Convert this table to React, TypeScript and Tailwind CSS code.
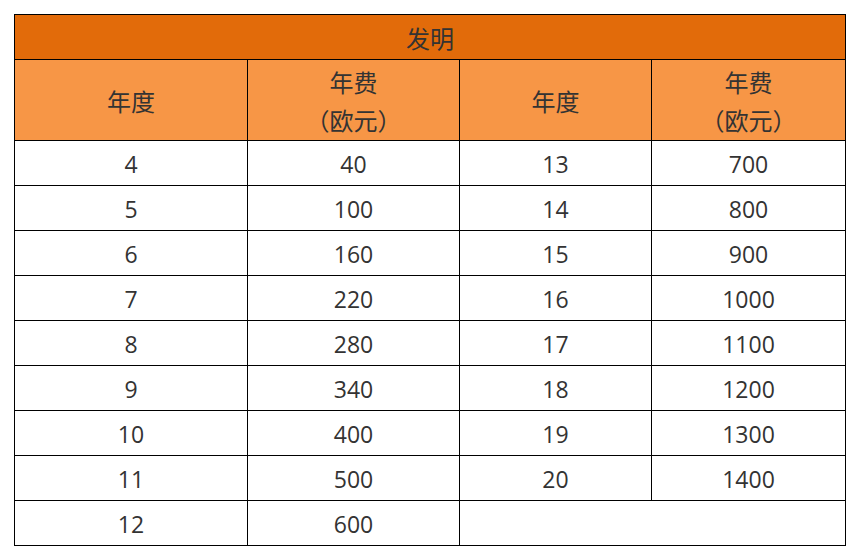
import React from "react";

const left = [
  ["4", "40"],
  ["5", "100"],
  ["6", "160"],
  ["7", "220"],
  ["8", "280"],
  ["9", "340"],
  ["10", "400"],
  ["11", "500"],
  ["12", "600"],
];
const right = [
  ["13", "700"],
  ["14", "800"],
  ["15", "900"],
  ["16", "1000"],
  ["17", "1100"],
  ["18", "1200"],
  ["19", "1300"],
  ["20", "1400"],
];

export default function App() {
  const td = "border border-black text-center align-middle px-0 pb-0 pt-[2px]";
  const th = "border border-black text-center align-middle px-0 pb-0 pt-[4px] text-[24px]";
  return (
    <div
      className="w-[866px] h-[558px] bg-white pt-[14px] pl-[14px] text-[#333333] text-[23px]"
      style={{ fontFamily: '"Open Sans", "Noto Sans CJK SC", sans-serif' }}
    >
      <table className="table-fixed border-collapse w-[831px]">
        <colgroup>
          <col className="w-[233px]" />
          <col className="w-[212px]" />
          <col className="w-[192px]" />
          <col className="w-[194px]" />
        </colgroup>
        <tbody>
          <tr className="h-[45px]">
            <td colSpan={4} className="border border-black text-center align-middle px-0 pb-0 pt-[3px] text-[24px] leading-[30px] bg-[#E26B0A]">
              发明
            </td>
          </tr>
          <tr className="h-[81px] bg-[#F79646]">
            <td className={`${th} leading-[30px]`}>年度</td>
            <td className={`${th} leading-[38px]`}>
              年费
              <br />
              （欧元）
            </td>
            <td className={`${th} leading-[30px]`}>年度</td>
            <td className={`${th} leading-[38px]`}>
              年费
              <br />
              （欧元）
            </td>
          </tr>
          {left.map((l, i) => (
            <tr key={i} className="h-[45px]">
              <td className={td}>{l[0]}</td>
              <td className={td}>{l[1]}</td>
              {right[i] ? (
                <>
                  <td className={td}>{right[i][0]}</td>
                  <td className={td}>{right[i][1]}</td>
                </>
              ) : (
                <td colSpan={2} className={td}></td>
              )}
            </tr>
          ))}
        </tbody>
      </table>
    </div>
  );
}
